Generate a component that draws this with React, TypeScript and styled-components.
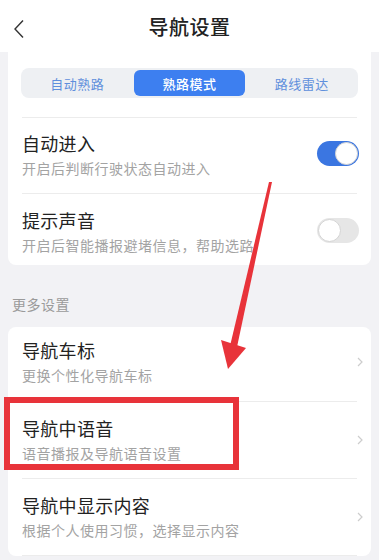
import React from "react";
import styled, { createGlobalStyle } from "styled-components";

const Global = createGlobalStyle`
  html, body { margin: 0; padding: 0; background: #f2f2f5; }
  body { font-family: "Noto Sans CJK SC", "Noto Sans", sans-serif; }
  * { box-sizing: border-box; }
`;

const Page = styled.div`
  position: relative;
  width: 379px;
  height: 560px;
  overflow: hidden;
  background: #f2f2f5;
`;

const Header = styled.header`
  height: 52px;
  background: #fff;
  display: flex;
  align-items: center;
  justify-content: center;
  position: relative;
`;

const BackButton = styled.div`
  position: absolute;
  left: 13px;
  top: 19px;
  width: 12px;
  height: 20px;
  display: flex;
`;

const Title = styled.h1`
  margin: 0;
  font-size: 20px;
  font-weight: 500;
  color: #222;
  letter-spacing: 0.5px;
  line-height: 24px;
  margin-top: 1px;
`;

const Body = styled.main`
  padding: 0 8px;
`;

const Card = styled.section<{ $flatTop?: boolean }>`
  background: #fff;
  border-radius: ${(p) => (p.$flatTop ? "0 0 8px 8px" : "8px")};
`;

const SegmentWrap = styled.div`
  padding: 16px 13px 19px;
  border-bottom: 1px solid #ececec;
  margin: 0 14px 0 14px;
  padding-left: 0;
  padding-right: 0;
`;

const Segment = styled.div`
  height: 30px;
  background: #eef0f3;
  border-radius: 8px;
  display: grid;
  grid-template-columns: 1fr 1fr 1fr;
  padding: 2px 0;
  margin: 0 -1px;
`;

const SegItem = styled.div<{ $active?: boolean }>`
  display: flex;
  align-items: center;
  justify-content: center;
  border-radius: 6px;
  font-size: 13px;
  letter-spacing: 0.5px;
  color: ${(p) => (p.$active ? "#fff" : "#5f8fdc")};
  background: ${(p) => (p.$active ? "#3d7ff0" : "transparent")};
  font-weight: ${(p) => (p.$active ? 500 : 400)};
  margin: 0 1px;
`;

const Row = styled.div<{ $top?: number; $bottom?: number; $divider?: boolean }>`
  display: flex;
  align-items: center;
  padding: ${(p) => p.$top ?? 14}px 12px ${(p) => p.$bottom ?? 16}px 14px;
  position: relative;
  ${(p) =>
    p.$divider
      ? `&::after { content: ""; position: absolute; left: 14px; right: 14px; bottom: 0; height: 1px; background: #ececec; }`
      : ""}
`;

const RowText = styled.div`
  flex: 1;
  display: flex;
  flex-direction: column;
  gap: 3px;
`;

const RowTitle = styled.div`
  font-size: 18px;
  line-height: 24px;
  color: #222;
  letter-spacing: 0.3px;
`;

const RowSub = styled.div`
  font-size: 14px;
  line-height: 20px;
  color: #a3a3a3;
  letter-spacing: 0.5px;
`;

const Toggle = styled.div<{ $on?: boolean }>`
  width: 42px;
  height: 25px;
  border-radius: 13px;
  background: ${(p) => (p.$on ? "#3b76e1" : "#e6e6e6")};
  display: flex;
  align-items: center;
  justify-content: ${(p) => (p.$on ? "flex-end" : "flex-start")};
  padding: 1px;
  margin-top: -3px;
`;

const Knob = styled.div`
  width: 23px;
  height: 23px;
  border-radius: 50%;
  background: #fff;
  border: 1px solid #d4d4d4;
`;

const Chevron = styled.div`
  width: 6px;
  height: 10px;
  display: flex;
  margin-right: -4px;
`;

const SectionLabel = styled.div`
  font-size: 14px;
  line-height: 20px;
  color: #9a9a9a;
  padding: 29px 4px 13px;
  letter-spacing: 0.5px;
`;

const Highlight = styled.div`
  position: absolute;
  left: 4px;
  top: 397px;
  width: 235px;
  height: 73px;
  border: 6px solid #e8333a;
  pointer-events: none;
`;

const ArrowSvg = styled.svg`
  position: absolute;
  left: 0;
  top: 0;
  pointer-events: none;
`;

const ChevronIcon = () => (
  <Chevron>
    <svg width="6" height="10" viewBox="0 0 6 10">
      <path d="M1 1 L5 5 L1 9" fill="none" stroke="#cdcdcd" strokeWidth="1.2" />
    </svg>
  </Chevron>
);

type NavItem = { title: string; sub: string };
const navItems: NavItem[] = [
  { title: "导航车标", sub: "更换个性化导航车标" },
  { title: "导航中语音", sub: "语音播报及导航语音设置" },
  { title: "导航中显示内容", sub: "根据个人使用习惯，选择显示内容" },
];

export default function App() {
  return (
    <Page>
      <Global />
      <Header>
        <BackButton>
          <svg width="12" height="20" viewBox="0 0 12 20">
            <path d="M10 1.5 L2 10 L10 18.5" fill="none" stroke="#333" strokeWidth="1.4" />
          </svg>
        </BackButton>
        <Title>导航设置</Title>
      </Header>
      <Body>
        <Card $flatTop>
          <SegmentWrap>
            <Segment>
              <SegItem>自动熟路</SegItem>
              <SegItem $active>熟路模式</SegItem>
              <SegItem>路线雷达</SegItem>
            </Segment>
          </SegmentWrap>
          <Row $divider $top={13}>
            <RowText>
              <RowTitle>自动进入</RowTitle>
              <RowSub>开启后判断行驶状态自动进入</RowSub>
            </RowText>
            <Toggle $on>
              <Knob />
            </Toggle>
          </Row>
          <Row $bottom={10}>
            <RowText>
              <RowTitle>提示声音</RowTitle>
              <RowSub>开启后智能播报避堵信息，帮助选路</RowSub>
            </RowText>
            <Toggle>
              <Knob />
            </Toggle>
          </Row>
        </Card>
        <SectionLabel>更多设置</SectionLabel>
        <Card>
          {navItems.map((it, i) => (
            <Row
              key={it.title}
              $divider
              $top={i === 0 ? 11 : 14}
              $bottom={i === 0 ? 17 : 16}
            >
              <RowText>
                <RowTitle>{it.title}</RowTitle>
                <RowSub>{it.sub}</RowSub>
              </RowText>
              <ChevronIcon />
            </Row>
          ))}
        </Card>
      </Body>
      <Highlight />
      <ArrowSvg width="379" height="560" viewBox="0 0 379 560">
        <polygon points="269,182 272,182 237,347 230,346" fill="#e8333a" />
        <polygon points="221,340 246,348 228,369" fill="#e8333a" />
      </ArrowSvg>
    </Page>
  );
}
